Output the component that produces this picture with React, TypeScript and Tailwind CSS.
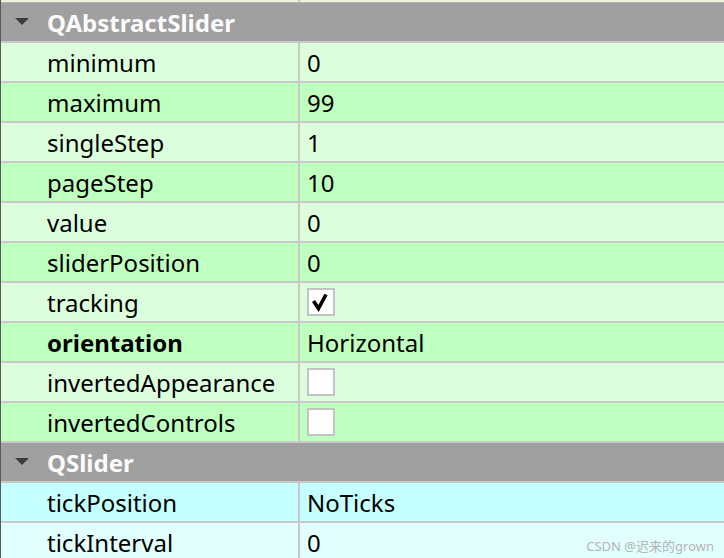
import React from "react";

type Row = {
	name: string;
	value?: string;
	check?: boolean;
	bold?: boolean;
};

const sliderRows: Row[] = [
	{ name: "minimum", value: "0" },
	{ name: "maximum", value: "99" },
	{ name: "singleStep", value: "1" },
	{ name: "pageStep", value: "10" },
	{ name: "value", value: "0" },
	{ name: "sliderPosition", value: "0" },
	{ name: "tracking", check: true },
	{ name: "orientation", value: "Horizontal", bold: true },
	{ name: "invertedAppearance", check: false },
	{ name: "invertedControls", check: false },
];

const qsliderRows: Row[] = [
	{ name: "tickPosition", value: "NoTicks" },
	{ name: "tickInterval", value: "0" },
];

const CheckBox = ({ checked }: { checked: boolean }) => (
	<div className="w-[28px] h-[28px] border-2 border-[#c4c4c4] bg-white flex items-center justify-center">
		{checked && (
			<svg width="24" height="24" viewBox="0 0 24 24">
				<path d="M4.5 11 L9.5 18.5 L17 4.5" fill="none" stroke="#000" strokeWidth="3.6" strokeLinejoin="miter" />
			</svg>
		)}
	</div>
);

const Header = ({ title }: { title: string }) => (
	<div className="h-[40px] bg-[#a0a0a0] border-b-2 border-[#c8c8c8] flex items-center">
		<div className="w-[46px] flex justify-center pr-[5px]">
			<svg width="14" height="8" viewBox="0 0 14 8">
				<path d="M0 0 H14 L7 7 Z" fill="#3c3c3c" />
			</svg>
		</div>
		<span className="font-bold text-[24px] text-[#fcfcfc] leading-none pt-[1px]">{title}</span>
	</div>
);

const PropRow = ({ row, bg }: { row: Row; bg: string }) => (
	<div className={`h-[40px] flex border-b-2 border-[#c8c8c8] ${bg}`}>
		<div className={`w-[297px] pl-[46px] flex items-center text-[24px] text-black leading-none pt-[2px] ${row.bold ? "font-bold" : ""}`}>
			{row.name}
		</div>
		<div className="w-[2px] bg-[#c8c8c8]" />
		<div className="flex-1 pl-[7px] flex items-center text-[24px] text-black leading-none">
			{row.check === undefined ? <span className="pt-[2px]">{row.value}</span> : <CheckBox checked={row.check} />}
		</div>
	</div>
);

export default function App() {
	return (
		<div
			className="relative w-[724px] h-[558px] overflow-hidden bg-[#e2ffff] border-l border-[#5a5a5a]"
			style={{ fontFamily: '"Noto Sans", "Noto Sans CJK SC", sans-serif' }}
		>
			<div className="h-[3px] flex border-b border-[#b4b4b4] bg-[#f2f2dc]">
				<div className="w-[297px]" />
				<div className="w-[2px] bg-[#c8c8c8]" />
			</div>
			<Header title="QAbstractSlider" />
			{sliderRows.map((r, i) => (
				<PropRow key={r.name} row={r} bg={i % 2 === 0 ? "bg-[#ddfedd]" : "bg-[#bfffbf]"} />
			))}
			<Header title="QSlider" />
			{qsliderRows.map((r, i) => (
				<PropRow key={r.name} row={r} bg={i % 2 === 0 ? "bg-[#c6ffff]" : "bg-[#e2ffff]"} />
			))}
			<div className="absolute right-[10px] bottom-[5px] text-[13px] text-[#b4b4b4] leading-none">
				CSDN @迟来的grown
			</div>
		</div>
	);
}
